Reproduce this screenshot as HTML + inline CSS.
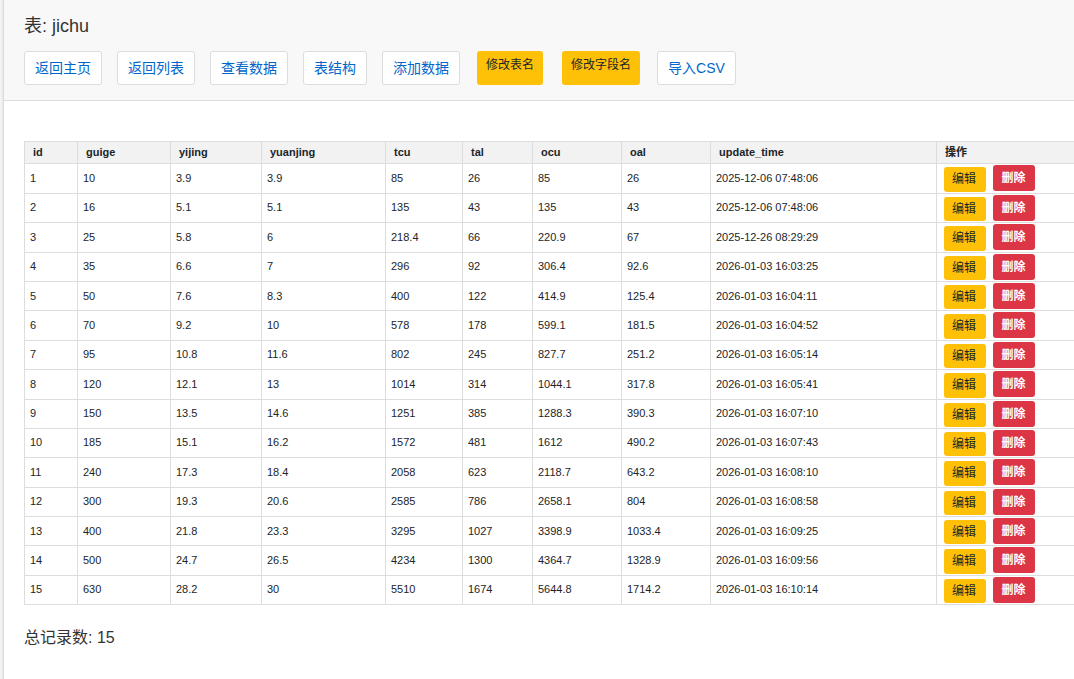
<!DOCTYPE html>
<html lang="zh"><head><meta charset="utf-8"><title>jichu</title>
<style>
html,body{margin:0;padding:0}
body{width:1074px;height:679px;overflow:hidden;position:relative;background:linear-gradient(90deg,#f4f4f4 0,#f4f4f4 1px,#f0f0f0 1px,#f0f0f0 2px,#e9e9e9 2px,#e9e9e9 3px,#ddd 3px);font-family:"Liberation Sans","Noto Sans CJK SC",sans-serif;color:#333}
#panel{position:absolute;left:3px;top:0;width:1200px;height:800px;background:#fff;border-left:1px solid #ddd}
#head{position:absolute;left:4px;top:0;width:1200px;height:100px;background:#f8f8f8;border-bottom:1px solid #ddd}
#title{position:absolute;left:24px;top:14px;font-size:18px;line-height:24px;white-space:nowrap}
.hb{position:absolute;top:51px;height:34px;box-sizing:border-box;border-radius:3px;text-align:center;white-space:nowrap}
.hb.d{background:#fff;border:1px solid #ddd;font-size:14px;line-height:32px;color:#0066cc}
.hb.w{background:#ffc107;font-size:12px;line-height:28.5px;color:#212529}
table{position:absolute;left:24px;top:141px;border-collapse:collapse;table-layout:fixed;width:1113px;font-size:11px}
th,td{border:1px solid #ddd;padding:7px 0 0 5px;line-height:14px;vertical-align:top;color:#212529;text-align:left;white-space:nowrap;overflow:hidden;box-sizing:border-box}
th{background:#f2f2f2;font-weight:bold;padding:3px 0 0 8px}
td.act{padding:0;position:relative}
.eb,.db{position:absolute;display:block;border-radius:3px;text-align:center;font-size:12px;box-sizing:border-box}
.eb{left:7px;top:3px;width:42px;padding-right:2px;height:25px;line-height:25.5px;background:#ffc107;color:#212529}
.db{left:56px;top:1px;width:42px;padding-right:1px;height:26px;line-height:27.5px;background:#dc3545;color:#fff;font-weight:bold}
#foot{position:absolute;left:24px;top:627px;font-size:16px;line-height:22px;white-space:nowrap}
</style></head><body>
<div id="panel"></div>
<div id="head"></div>
<div id="title">表: jichu</div>
<div class="hb d" style="left:24px;width:78px">返回主页</div>
<div class="hb d" style="left:117px;width:78px">返回列表</div>
<div class="hb d" style="left:210px;width:78px">查看数据</div>
<div class="hb d" style="left:303px;width:64px">表结构</div>
<div class="hb d" style="left:382px;width:78px">添加数据</div>
<div class="hb w" style="left:477px;width:66px">修改表名</div>
<div class="hb w" style="left:562px;width:78px">修改字段名</div>
<div class="hb d" style="left:657px;width:79px">导入<span>CSV</span></div>

<table><colgroup><col style="width:53px"><col style="width:93px"><col style="width:91px"><col style="width:124px"><col style="width:77px"><col style="width:70px"><col style="width:89px"><col style="width:89px"><col style="width:226px"><col style="width:200px"></colgroup>
<thead><tr style="height:22px"><th>id</th><th>guige</th><th>yijing</th><th>yuanjing</th><th>tcu</th><th>tal</th><th>ocu</th><th>oal</th><th>update_time</th><th>操作</th></tr></thead>
<tbody>
<tr style="height:30px"><td>1</td><td>10</td><td>3.9</td><td>3.9</td><td>85</td><td>26</td><td>85</td><td>26</td><td>2025-12-06 07:48:06</td><td class="act"><span class="eb" style="height:25px;line-height:25.5px">编辑</span><span class="db">删除</span></td></tr>
<tr style="height:29px"><td style="padding-top:6px">2</td><td style="padding-top:6px">16</td><td style="padding-top:6px">5.1</td><td style="padding-top:6px">5.1</td><td style="padding-top:6px">135</td><td style="padding-top:6px">43</td><td style="padding-top:6px">135</td><td style="padding-top:6px">43</td><td style="padding-top:6px">2025-12-06 07:48:06</td><td class="act"><span class="eb" style="height:24px;line-height:24.5px">编辑</span><span class="db">删除</span></td></tr>
<tr style="height:30px"><td>3</td><td>25</td><td>5.8</td><td>6</td><td>218.4</td><td>66</td><td>220.9</td><td>67</td><td>2025-12-26 08:29:29</td><td class="act"><span class="eb" style="height:25px;line-height:25.5px">编辑</span><span class="db">删除</span></td></tr>
<tr style="height:29px"><td style="padding-top:6px">4</td><td style="padding-top:6px">35</td><td style="padding-top:6px">6.6</td><td style="padding-top:6px">7</td><td style="padding-top:6px">296</td><td style="padding-top:6px">92</td><td style="padding-top:6px">306.4</td><td style="padding-top:6px">92.6</td><td style="padding-top:6px">2026-01-03 16:03:25</td><td class="act"><span class="eb" style="height:24px;line-height:24.5px">编辑</span><span class="db">删除</span></td></tr>
<tr style="height:29px"><td>5</td><td>50</td><td>7.6</td><td>8.3</td><td>400</td><td>122</td><td>414.9</td><td>125.4</td><td>2026-01-03 16:04:11</td><td class="act"><span class="eb" style="height:24px;line-height:24.5px">编辑</span><span class="db">删除</span></td></tr>
<tr style="height:30px"><td>6</td><td>70</td><td>9.2</td><td>10</td><td>578</td><td>178</td><td>599.1</td><td>181.5</td><td>2026-01-03 16:04:52</td><td class="act"><span class="eb" style="height:25px;line-height:25.5px">编辑</span><span class="db">删除</span></td></tr>
<tr style="height:29px"><td style="padding-top:6px">7</td><td style="padding-top:6px">95</td><td style="padding-top:6px">10.8</td><td style="padding-top:6px">11.6</td><td style="padding-top:6px">802</td><td style="padding-top:6px">245</td><td style="padding-top:6px">827.7</td><td style="padding-top:6px">251.2</td><td style="padding-top:6px">2026-01-03 16:05:14</td><td class="act"><span class="eb" style="height:24px;line-height:24.5px">编辑</span><span class="db">删除</span></td></tr>
<tr style="height:30px"><td>8</td><td>120</td><td>12.1</td><td>13</td><td>1014</td><td>314</td><td>1044.1</td><td>317.8</td><td>2026-01-03 16:05:41</td><td class="act"><span class="eb" style="height:25px;line-height:25.5px">编辑</span><span class="db">删除</span></td></tr>
<tr style="height:29px"><td style="padding-top:6px">9</td><td style="padding-top:6px">150</td><td style="padding-top:6px">13.5</td><td style="padding-top:6px">14.6</td><td style="padding-top:6px">1251</td><td style="padding-top:6px">385</td><td style="padding-top:6px">1288.3</td><td style="padding-top:6px">390.3</td><td style="padding-top:6px">2026-01-03 16:07:10</td><td class="act"><span class="eb" style="height:24px;line-height:24.5px">编辑</span><span class="db">删除</span></td></tr>
<tr style="height:29px"><td style="padding-top:6px">10</td><td style="padding-top:6px">185</td><td style="padding-top:6px">15.1</td><td style="padding-top:6px">16.2</td><td style="padding-top:6px">1572</td><td style="padding-top:6px">481</td><td style="padding-top:6px">1612</td><td style="padding-top:6px">490.2</td><td style="padding-top:6px">2026-01-03 16:07:43</td><td class="act"><span class="eb" style="height:24px;line-height:24.5px">编辑</span><span class="db">删除</span></td></tr>
<tr style="height:30px"><td>11</td><td>240</td><td>17.3</td><td>18.4</td><td>2058</td><td>623</td><td>2118.7</td><td>643.2</td><td>2026-01-03 16:08:10</td><td class="act"><span class="eb" style="height:25px;line-height:25.5px">编辑</span><span class="db">删除</span></td></tr>
<tr style="height:29px"><td style="padding-top:6px">12</td><td style="padding-top:6px">300</td><td style="padding-top:6px">19.3</td><td style="padding-top:6px">20.6</td><td style="padding-top:6px">2585</td><td style="padding-top:6px">786</td><td style="padding-top:6px">2658.1</td><td style="padding-top:6px">804</td><td style="padding-top:6px">2026-01-03 16:08:58</td><td class="act"><span class="eb" style="height:24px;line-height:24.5px">编辑</span><span class="db">删除</span></td></tr>
<tr style="height:29px"><td>13</td><td>400</td><td>21.8</td><td>23.3</td><td>3295</td><td>1027</td><td>3398.9</td><td>1033.4</td><td>2026-01-03 16:09:25</td><td class="act"><span class="eb" style="height:24px;line-height:24.5px">编辑</span><span class="db">删除</span></td></tr>
<tr style="height:30px"><td>14</td><td>500</td><td>24.7</td><td>26.5</td><td>4234</td><td>1300</td><td>4364.7</td><td>1328.9</td><td>2026-01-03 16:09:56</td><td class="act"><span class="eb" style="height:25px;line-height:25.5px">编辑</span><span class="db">删除</span></td></tr>
<tr style="height:29px"><td style="padding-top:6px">15</td><td style="padding-top:6px">630</td><td style="padding-top:6px">28.2</td><td style="padding-top:6px">30</td><td style="padding-top:6px">5510</td><td style="padding-top:6px">1674</td><td style="padding-top:6px">5644.8</td><td style="padding-top:6px">1714.2</td><td style="padding-top:6px">2026-01-03 16:10:14</td><td class="act"><span class="eb" style="height:24px;line-height:24.5px">编辑</span><span class="db">删除</span></td></tr>
</tbody></table>
<div id="foot">总记录数: 15</div>
</body></html>
